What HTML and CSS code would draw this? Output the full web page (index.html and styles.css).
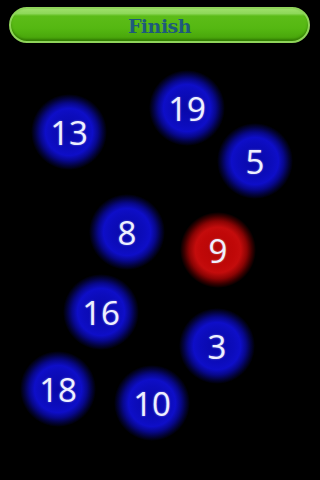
FILE: index.html
```html
<!DOCTYPE html>
<html>
<head>
<meta charset="utf-8">
<link rel="stylesheet" href="styles.css">
</head>
<body>
<div class="screen">
  <div class="header">
    <div class="finish">Finish</div>
  </div>
  <div class="field">
    <div class="ball blue" style="left:31px;top:44px">13</div>
    <div class="ball blue" style="left:149px;top:20px">19</div>
    <div class="ball blue" style="left:217px;top:73px">5</div>
    <div class="ball blue" style="left:89px;top:144px">8</div>
    <div class="ball red" style="left:180px;top:162px">9</div>
    <div class="ball blue" style="left:63px;top:224px">16</div>
    <div class="ball blue" style="left:179px;top:258px">3</div>
    <div class="ball blue" style="left:20px;top:301px">18</div>
    <div class="ball blue" style="left:114px;top:315px">10</div>
  </div>
</div>
</body>
</html>
```
FILE: styles.css
```css
html, body {
  margin: 0;
  padding: 0;
  background: #000;
}
.screen {
  width: 320px;
  height: 480px;
  background: #000;
  overflow: hidden;
}
.header {
  padding: 7px 10px 7px 9px;
  height: 36px;
}
.finish {
  height: 36px;
  box-sizing: border-box;
  border-radius: 18px;
  border: 2px solid #8fd45a;
  background: linear-gradient(to bottom, #9ee06a 0%, #8ed85a 14%, #5cbc18 22%, #55b812 60%, #4aa80c 88%, #3e9606 100%);
  box-shadow: inset 0 -2px 2px rgba(40, 100, 0, 0.5);
  display: flex;
  align-items: center;
  justify-content: center;
  font-family: "DejaVu Serif", serif;
  font-size: 19px;
  font-weight: bold;
  letter-spacing: -0.5px;
  color: #1e5a7c;
  padding-top: 1px;
}
.field {
  position: relative;
  height: 430px;
}
.ball {
  position: absolute;
  width: 76px;
  height: 76px;
  border-radius: 50%;
  display: flex;
  align-items: center;
  justify-content: center;
  font-family: "Open Sans", sans-serif;
  font-size: 33px;
  font-weight: 500;
  color: #eef0ff;
  text-shadow: 0 0 2px rgba(255, 255, 255, 0.45);
}
.blue {
  background: radial-gradient(circle closest-side, #0808a8 0%, #0c0cbc 45%, #0e0ec8 62%, #08088c 76%, #03033c 89%, rgba(0, 0, 20, 0) 100%);
}
.red {
  background: radial-gradient(circle closest-side, #b40606 0%, #c00808 45%, #c40c0c 60%, #8c0404 76%, #3c0000 89%, rgba(20, 0, 0, 0) 100%);
}
```
